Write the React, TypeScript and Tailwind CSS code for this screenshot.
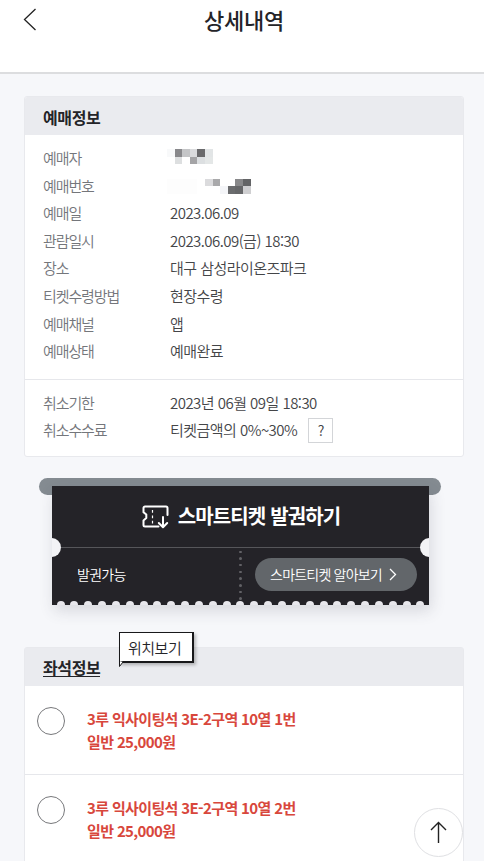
const bookingRows = [
  { label: "예매일", value: "2023.06.09" },
  { label: "관람일시", value: "2023.06.09(금) 18:30" },
  { label: "장소", value: "대구 삼성라이온즈파크" },
  { label: "티켓수령방법", value: "현장수령" },
  { label: "예매채널", value: "앱" },
  { label: "예매상태", value: "예매완료" },
];

const seats = [
  { id: 1, seat: "3루 익사이팅석 3E-2구역 10열 1번", price: "일반 25,000원" },
  { id: 2, seat: "3루 익사이팅석 3E-2구역 10열 2번", price: "일반 25,000원" },
];

// masked personal info, "" is an empty cell
const nameMask = [
  ["#f8f9fa", "#88888b", "#c4c5c7", "#dadbdd", "#6a6a6c", "#e2e5e6"],
  ["", "#dddfe0", "", "#a4a4a6", "#dcdfe1", "#e4e7e7"],
];
const numberMask = [
  ["#fdfdfd", "#fdfdfd", "#fdfdfd", "#fdfdfd", "", "#dbdbdd", "#a9a9ab", "", "", "#88888a", "#636466"],
  ["#fdfdfd", "#fdfdfd", "#fdfdfd", "#fdfdfd", "", "", "", "#f4f5f8", "#6b6c6e", "#666769", "#cfcfd1"],
];

function Mask({ rows }: { rows: string[][] }) {
  return (
    <div className="-ml-[3px]">
      {rows.map((row, i) => (
        <div key={i} className="flex">
          {row.map((color, j) => (
            <span key={j} className="h-[7.6px] w-[7.6px]" style={{ backgroundColor: color || "transparent" }} />
          ))}
        </div>
      ))}
    </div>
  );
}

function Row({ label, children }: { label: string; children: React.ReactNode }) {
  return (
    <div className="flex h-[27.6px] items-center">
      <dt className="w-[127px] shrink-0 tracking-[-1.1px] text-[#74767b]">{label}</dt>
      <dd className="flex items-center tracking-[-0.53px] text-[#444548]">{children}</dd>
    </div>
  );
}

function SmartTicket() {
  return (
    <section className="relative ml-[39px] mr-[43px] mt-[21px] h-[128px]">
      <div className="absolute inset-x-0 top-0 h-[17px] rounded-full bg-[#848b91]" />
      <div className="relative ml-[13px] mr-3 h-full pt-[7.5px]">
        <div className="relative h-[119.5px] bg-[#242328] text-white shadow-[2px_6px_14px_rgba(60,60,80,0.16)]">
          <div className="flex h-[62.5px] items-center justify-center gap-[9px] border-b border-[#56565a] pl-px">
            <svg className="mt-[2px]" width="27" height="24" viewBox="0 0 27 24" fill="none" stroke="currentColor" strokeWidth="2" strokeLinecap="round" strokeLinejoin="round">
              <path d="M25.5 10V3A1.5 1.5 0 0 0 24 1.5H3A1.5 1.5 0 0 0 1.5 3v4.2l2.8 2.3v3.6l-2.8 2.3V20A1.5 1.5 0 0 0 3 21.5h13.5" />
              <path d="M10.5 5v14" strokeWidth="1.2" strokeDasharray="2.8 2.6" strokeLinecap="butt" />
              <path d="M21 12v10M16.8 18l4.2 4.2 4.2-4.2" />
            </svg>
            <h2 className="text-[20px] font-bold leading-none tracking-[-0.85px]">스마트티켓 발권하기</h2>
          </div>
          <div className="flex h-[57px]">
            <div className="w-[189px] pl-[25px] text-[14px] font-[350] leading-[53px] tracking-[-0.7px]">발권가능</div>
            <div className="-ml-[2px] flex h-[52px] flex-col justify-between pt-[2.5px]">
              {Array.from({ length: 8 }, (_, i) => (
                <span key={i} className="h-[2.5px] w-[2.5px] rounded-full bg-[#626266]" />
              ))}
            </div>
            <button className="ml-[13.5px] mt-[10px] flex h-[33px] w-[162px] items-center justify-center gap-[7px] rounded-full bg-[#62666a] pr-[5px] text-[14px] font-[350] tracking-[-0.8px]">
              스마트티켓 알아보기
              <svg width="8" height="13" viewBox="0 0 8 13" fill="none" stroke="currentColor" strokeWidth="1.3">
                <path d="M1 1l5.5 5.5L1 12" />
              </svg>
            </button>
          </div>
          <div className="absolute inset-y-0 left-0 flex w-[9px] items-center overflow-hidden">
            <span className="mt-[5px] -ml-[10px] h-[19px] w-[19px] shrink-0 rounded-full bg-[#f3f3f6]" />
          </div>
          <div className="absolute inset-y-0 right-0 flex w-[9px] items-center overflow-hidden">
            <span className="mt-[5px] h-[19px] w-[19px] shrink-0 rounded-full bg-[#f3f3f6]" />
          </div>
          <div className="absolute inset-x-[4.5px] bottom-0 flex h-1 justify-between overflow-hidden">
            {Array.from({ length: 27 }, (_, i) => (
              <span key={i} className="h-2 w-2 rounded-full bg-[#e8e7ec]" />
            ))}
          </div>
        </div>
      </div>
    </section>
  );
}

export default function App() {
  return (
    <main
      lang="ko"
      className="relative h-[861px] w-full overflow-hidden bg-[#f6f7fa] font-['Noto_Sans_CJK_KR',sans-serif] text-[15px] text-[#242428]"
    >
      <header className="relative flex h-[74px] justify-center border-b-2 border-[#dcdddf] bg-white pl-1 pt-[3px]">
        <button aria-label="뒤로" className="absolute left-[23px] top-[8px]">
          <svg width="14" height="23" viewBox="0 0 14 23" fill="none" stroke="#222" strokeWidth="1.3">
            <path d="M12.5 1L1.5 11.5l11 10.5" />
          </svg>
        </button>
        <h1 className="text-[22px] font-medium leading-8 tracking-[-0.2px]">상세내역</h1>
      </header>

      <section className="ml-6 mr-5 mt-[22px] h-[361px] overflow-hidden rounded-[3px] border border-[#e8e9ed] bg-white">
        <h2 className="flex h-[38px] items-center bg-[#eaebef] pl-[18px] pt-px text-[16px] font-bold tracking-[-0.4px]">예매정보</h2>
        <dl className="h-[245px] border-b border-[#e6e7eb] pl-[18px] pt-[9.5px] font-[350]">
          <Row label="예매자">
            <div className="-mt-[3px]">
              <Mask rows={nameMask} />
            </div>
          </Row>
          <Row label="예매번호">
            <div className="mt-px">
              <Mask rows={numberMask} />
            </div>
          </Row>
          {bookingRows.map((row) => (
            <Row key={row.label} label={row.label}>{row.value}</Row>
          ))}
        </dl>
        <dl className="pl-[18px] pt-[9px] font-[350]">
          <Row label="취소기한">2023년 06월 09일 18:30</Row>
          <Row label="취소수수료">
            티켓금액의 0%~30%
            <button className="ml-[11px] h-[25px] w-[25px] border border-[#d3d5d8] text-[14px] font-normal leading-[23px]">?</button>
          </Row>
        </dl>
      </section>

      <SmartTicket />

      <section className="relative ml-6 mr-5 mt-[41px] h-[260px] rounded-[3px] border border-[#e8e9ed] bg-white">
        <div className="flex h-[38px] items-center bg-[#eaebef] pl-[18px] pt-px">
          <h2 className="border-b border-[#242428] text-[16px] font-bold leading-[18px] tracking-[-0.4px]">좌석정보</h2>
        </div>
        <div className="absolute left-[94px] top-[-16px]">
          <div className="h-[31px] w-[75px] border border-b-2 border-r-2 border-[#18181a] bg-white pl-2 text-[15px] font-[350] leading-[30px] tracking-[-0.5px] shadow-[2px_2px_3px_rgba(0,0,0,0.25)]">
            위치보기
          </div>
          <svg className="absolute left-0 top-[29px]" width="5" height="7" viewBox="0 0 5 7">
            <path d="M.5 0v5.5L4 1" fill="#fff" stroke="#18181a" strokeWidth="1" />
          </svg>
        </div>
        {seats.map(({ id, seat, price }) => (
          <label key={id} className="flex h-[89px] border-b border-[#e6e7eb] pl-3 pt-[21px]">
            <input type="radio" name="seat" className="h-7 w-7 shrink-0 appearance-none rounded-full border border-[#77787b]" />
            <span className="-mt-[0.5px] ml-[22px] text-[15px] font-bold leading-[23px] tracking-[-0.64px] text-[#d8473c]">
              {seat}
              <br />
              {price}
            </span>
          </label>
        ))}
      </section>

      <button aria-label="맨 위로" className="absolute left-[414px] top-[808px] flex h-[49px] w-[49px] items-center justify-center rounded-full border border-[#dfe0e3] bg-white">
        <svg width="17" height="23" viewBox="0 0 17 23" fill="none" stroke="#222" strokeWidth="1.4">
          <path d="M8.5 22V1.5M1 9l7.5-7.5L16 9" />
        </svg>
      </button>
    </main>
  );
}
